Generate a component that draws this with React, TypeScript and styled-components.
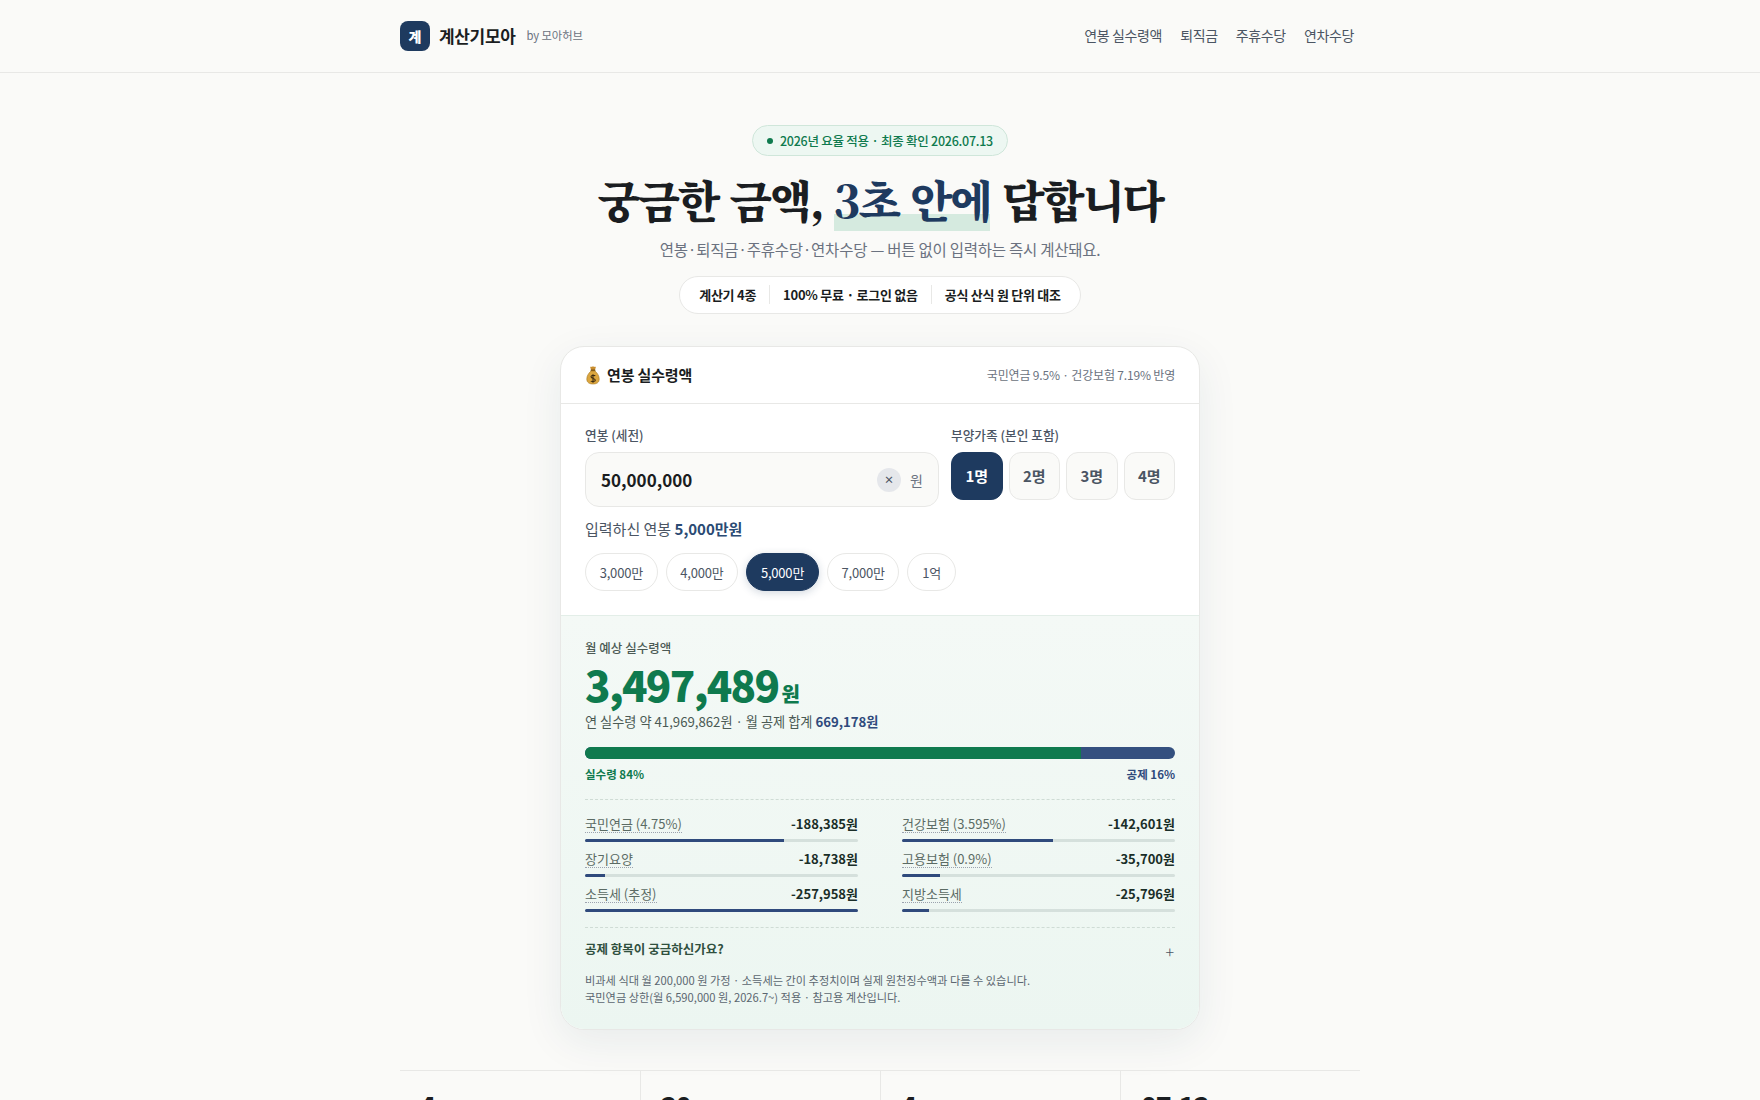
import React from 'react'
import styled, { createGlobalStyle } from 'styled-components'

const GlobalStyle = createGlobalStyle`
    * {
        box-sizing: border-box;
    }
    html,
    body {
        margin: 0;
        height: 1100px;
        overflow: hidden;
        background: #fafaf8;
        color: #1a1d21;
        font-family: 'Noto Sans CJK KR', 'Noto Sans', sans-serif;
    }
`

const NAV_LINKS = ['연봉 실수령액', '퇴직금', '주휴수당', '연차수당']
const TRUST = ['계산기 4종', '100% 무료 · 로그인 없음', '공식 산식 원 단위 대조']
const DEPENDENTS = ['1명', '2명', '3명', '4명']
const PRESETS = ['3,000만', '4,000만', '5,000만', '7,000만', '1억']
const DEDUCTIONS = [
    { label: '국민연금 (4.75%)', value: '-188,385원', pct: 72.8 },
    { label: '건강보험 (3.595%)', value: '-142,601원', pct: 55.3 },
    { label: '장기요양', value: '-18,738원', pct: 7.3 },
    { label: '고용보험 (0.9%)', value: '-35,700원', pct: 14 },
    { label: '소득세 (추정)', value: '-257,958원', pct: 100 },
    { label: '지방소득세', value: '-25,796원', pct: 10 },
]
const STATS = [
    { id: 'calculators', value: '4' },
    { id: 'days', value: '30' },
    { id: 'rates', value: '4' },
    { id: 'updated', value: '07.13' },
]

const MoneyBag = () => (
    <BagIcon width="16" height="20" viewBox="0 0 16 20" aria-hidden="true">
        <path d="M5 1.5C6 2.6 7 1 8 1.5C9 1 10 2.6 11 1.5L10 5H6Z" fill="#c98d2e" />
        <rect x="5.6" y="4.4" width="4.8" height="1.6" rx="0.6" fill="#7a5418" />
        <path
            d="M6 6C3.6 8 1.8 11 1.8 14C1.8 17.5 4.2 19 8 19C11.8 19 14.2 17.5 14.2 14C14.2 11 12.4 8 10 6Z"
            fill="#dba63f"
            stroke="#a6761f"
            strokeWidth="0.6"
        />
        <path
            d="M10.2 10.9C9.6 10 6 9.8 6 11.8C6 14 10.3 13 10.3 15.2C10.3 17 6.5 16.8 5.8 16M8 9.2V17.8"
            fill="none"
            stroke="#3b2a10"
            strokeWidth="1.1"
        />
    </BagIcon>
)

const App: React.FC = () => {
    return (
        <>
            <GlobalStyle />
            <Header>
                <HeaderInner>
                    <Brand>
                        <LogoMark>계</LogoMark>
                        <BrandName>계산기모아</BrandName>
                        <BrandBy>by 모아허브</BrandBy>
                    </Brand>
                    <Nav>
                        {NAV_LINKS.map((link) => (
                            <NavLink key={link}>{link}</NavLink>
                        ))}
                    </Nav>
                </HeaderInner>
            </Header>
            <Hero>
                <Badge>
                    <BadgeDot />
                    2026년 요율 적용 · 최종 확인 2026.07.13
                </Badge>
                <Title>
                    궁금한 금액, <Highlight>3초 안에</Highlight> 답합니다
                </Title>
                <Subtitle>연봉·퇴직금·주휴수당·연차수당 — 버튼 없이 입력하는 즉시 계산돼요.</Subtitle>
                <TrustBar>
                    {TRUST.map((item) => (
                        <TrustItem key={item}>{item}</TrustItem>
                    ))}
                </TrustBar>
            </Hero>
            <Card>
                <CardHead>
                    <CardTitle>
                        <MoneyBag />
                        연봉 실수령액
                    </CardTitle>
                    <CardNote>국민연금 9.5% · 건강보험 7.19% 반영</CardNote>
                </CardHead>
                <InputArea>
                    <FieldRow>
                        <div>
                            <FieldLabel>연봉 (세전)</FieldLabel>
                            <AmountBox>
                                <AmountValue>50,000,000</AmountValue>
                                <ClearButton>×</ClearButton>
                                <AmountUnit>원</AmountUnit>
                            </AmountBox>
                        </div>
                        <div>
                            <FieldLabel>부양가족 (본인 포함)</FieldLabel>
                            <DependentRow>
                                {DEPENDENTS.map((d, i) => (
                                    <DependentButton key={d} $active={i === 0}>
                                        {d}
                                    </DependentButton>
                                ))}
                            </DependentRow>
                        </div>
                    </FieldRow>
                    <EchoLine>
                        입력하신 연봉 <strong>5,000만원</strong>
                    </EchoLine>
                    <PresetRow>
                        {PRESETS.map((p) => (
                            <PresetChip key={p} $active={p === '5,000만'}>
                                {p}
                            </PresetChip>
                        ))}
                    </PresetRow>
                </InputArea>
                <Result>
                    <ResultLabel>월 예상 실수령액</ResultLabel>
                    <ResultAmount>
                        3,497,489<ResultUnit>원</ResultUnit>
                    </ResultAmount>
                    <ResultSub>
                        연 실수령 약 41,969,862원 · 월 공제 합계 <strong>669,178원</strong>
                    </ResultSub>
                    <SplitBar>
                        <SplitNet />
                    </SplitBar>
                    <SplitLegend>
                        <NetText>실수령 84%</NetText>
                        <DeductText>공제 16%</DeductText>
                    </SplitLegend>
                    <DeductionGrid>
                        {DEDUCTIONS.map((d) => (
                            <DeductionItem key={d.label}>
                                <DeductionLine>
                                    <DeductionName>{d.label}</DeductionName>
                                    <DeductionValue>{d.value}</DeductionValue>
                                </DeductionLine>
                                <MiniTrack>
                                    <MiniFill style={{ width: `${d.pct}%` }} />
                                </MiniTrack>
                            </DeductionItem>
                        ))}
                    </DeductionGrid>
                    <Faq>
                        <FaqTitle>공제 항목이 궁금하신가요?</FaqTitle>
                        <FaqPlus>+</FaqPlus>
                    </Faq>
                    <Disclaimer>
                        비과세 식대 월 200,000 원 가정 · 소득세는 간이 추정치이며 실제 원천징수액과 다를 수 있습니다.
                        <br />
                        국민연금 상한(월 6,590,000 원, 2026.7~) 적용 · 참고용 계산입니다.
                    </Disclaimer>
                </Result>
            </Card>
            <Stats>
                {STATS.map((s) => (
                    <StatCell key={s.id}>{s.value}</StatCell>
                ))}
            </Stats>
        </>
    )
}

export default App

const Header = styled.header`
    height: 73px;
    border-bottom: 1px solid #e8e8e6;
`

const HeaderInner = styled.div`
    width: 960px;
    height: 100%;
    margin: 0 auto;
    padding: 0 6px 0 0;
    display: flex;
    align-items: center;
    justify-content: space-between;
`

const Brand = styled.div`
    display: flex;
    align-items: center;
`

const LogoMark = styled.div`
    width: 30px;
    height: 30px;
    border-radius: 8px;
    background: #1e3a5f;
    color: #fff;
    font-size: 14px;
    font-weight: 900;
    display: flex;
    align-items: center;
    justify-content: center;
    margin-right: 9px;
`

const BrandName = styled.span`
    margin-bottom: 2px;
    font-size: 17px;
    font-weight: 700;
    letter-spacing: -0.34px;
    margin-right: 11px;
`

const BrandBy = styled.span`
    margin-bottom: 2px;
    font-size: 11.3px;
    letter-spacing: -0.1px;
    color: #6b7280;
`

const Nav = styled.nav`
    display: flex;
    gap: 18px;
    margin-bottom: 2px;
`

const NavLink = styled.a`
    font-size: 14px;
    letter-spacing: -0.35px;
    color: #4b5563;
`

const Hero = styled.section`
    padding-top: 52px;
    display: flex;
    flex-direction: column;
    align-items: center;
`

const Badge = styled.div`
    height: 31px;
    padding: 0 14px;
    border: 1px solid #cfe6da;
    border-radius: 999px;
    background: #edf7f2;
    color: #0f7a4e;
    font-size: 12.5px;
    letter-spacing: -0.25px;
    font-weight: 500;
    display: flex;
    align-items: center;
    gap: 7px;
`

const BadgeDot = styled.span`
    width: 6px;
    height: 6px;
    border-radius: 50%;
    background: #0f7a4e;
`

const Title = styled.h1`
    margin: 13px 0 0;
    font-family: 'Noto Serif CJK KR', serif;
    font-size: 44px;
    font-weight: 900;
    line-height: 60px;
    letter-spacing: -2.35px;
    word-spacing: 3px;
`

const Highlight = styled.span`
    color: #1e3a5f;
    background: linear-gradient(transparent 73%, #d5eadf 73%);
`

const Subtitle = styled.p`
    margin: 8px 0 0;
    font-size: 15.5px;
    letter-spacing: -0.25px;
    line-height: 24px;
    color: #6b7280;
`

const TrustBar = styled.div`
    margin-top: 15px;
    height: 38px;
    padding: 0 19px 2px;
    border: 1px solid #e8e8e6;
    border-radius: 999px;
    background: #fff;
    display: flex;
    align-items: center;
`

const TrustItem = styled.span`
    font-size: 13px;
    letter-spacing: -0.26px;
    font-weight: 600;
    padding: 0 13px;
    border-left: 1px solid #e8e8e6;
    &:first-child {
        border-left: none;
        padding-left: 0;
    }
    &:last-child {
        padding-right: 0;
    }
`

const Card = styled.main`
    width: 640px;
    margin: 32px auto 0;
    border: 1px solid #e8e8e6;
    border-radius: 24px;
    background: #fff;
    box-shadow: 0 12px 40px rgba(30, 58, 95, 0.08);
    overflow: hidden;
`

const CardHead = styled.div`
    height: 57px;
    padding: 0 24px 2px;
    border-bottom: 1px solid #e8e8e6;
    display: flex;
    align-items: center;
    justify-content: space-between;
`

const CardTitle = styled.h2`
    margin: 0;
    font-size: 15px;
    letter-spacing: -0.15px;
    font-weight: 700;
    display: flex;
    align-items: center;
    gap: 6px;
`

const BagIcon = styled.svg`
    margin-top: 2px;
`

const CardNote = styled.span`
    font-size: 12px;
    letter-spacing: -0.18px;
    color: #6b7280;
`

const InputArea = styled.div`
    padding: 21px 24px 24px;
`

const FieldRow = styled.div`
    display: grid;
    grid-template-columns: 354px 1fr;
    gap: 12px;
`

const FieldLabel = styled.div`
    font-size: 12.7px;
    font-weight: 500;
    line-height: 19px;
    color: #4b5563;
    margin-bottom: 8px;
`

const AmountBox = styled.div`
    height: 55px;
    padding: 0 15px;
    border: 1px solid #e8e8e6;
    border-radius: 14px;
    background: #fafaf8;
    display: flex;
    align-items: center;
`

const AmountValue = styled.span`
    flex: 1;
    font-size: 17px;
    font-weight: 700;
`

const ClearButton = styled.span`
    width: 24px;
    height: 24px;
    margin-right: 9px;
    border-radius: 50%;
    background: #e5e7eb;
    color: #4b5563;
    font-size: 10px;
    font-weight: 700;
    display: flex;
    align-items: center;
    justify-content: center;
`

const AmountUnit = styled.span`
    font-size: 14px;
    color: #6b7280;
`

const DependentRow = styled.div`
    display: grid;
    grid-template-columns: repeat(4, 1fr);
    gap: 6px;
`

const DependentButton = styled.div<{ $active: boolean }>`
    height: 48px;
    padding-bottom: 2px;
    border: 1px solid ${(p) => (p.$active ? '#1e3a5f' : '#e8e8e6')};
    border-radius: 12px;
    background: ${(p) => (p.$active ? '#1e3a5f' : '#fafaf8')};
    color: ${(p) => (p.$active ? '#fff' : '#4b5563')};
    font-size: 15px;
    font-weight: 700;
    display: flex;
    align-items: center;
    justify-content: center;
`

const EchoLine = styled.div`
    margin-top: 10px;
    font-size: 15px;
    line-height: 24px;
    color: #4b5563;
    strong {
        color: #2a4a73;
        font-weight: 700;
    }
`

const PresetRow = styled.div`
    margin-top: 12px;
    display: flex;
    gap: 8px;
`

const PresetChip = styled.div<{ $active: boolean }>`
    height: 38px;
    padding: 0 13.7px;
    border: 1px solid ${(p) => (p.$active ? '#1e3a5f' : '#e8e8e6')};
    border-radius: 999px;
    background: ${(p) => (p.$active ? '#1e3a5f' : '#fff')};
    color: ${(p) => (p.$active ? '#fff' : '#4b5563')};
    font-size: 13px;
    letter-spacing: -0.2px;
    display: flex;
    align-items: center;
    box-shadow: ${(p) => (p.$active ? '0 2px 8px rgba(30, 58, 95, 0.2)' : 'none')};
`

const Result = styled.section`
    padding: 23px 24px 23px;
    border-top: 1px solid #e3eee8;
    background: linear-gradient(180deg, #f4f9f6 0%, #ecf6f1 100%);
`

const ResultLabel = styled.div`
    font-size: 12.5px;
    font-weight: 500;
    line-height: 18px;
    color: #4b5a54;
`

const ResultAmount = styled.div`
    margin-top: 5px;
    font-size: 42px;
    font-weight: 800;
    line-height: 44px;
    letter-spacing: -1.68px;
    color: #0f7a4e;
`

const ResultUnit = styled.span`
    margin-left: 3px;
    font-size: 20px;
    line-height: 1;
    letter-spacing: 0;
`

const ResultSub = styled.div`
    margin-top: 6px;
    font-size: 13.2px;
    line-height: 20px;
    color: #4b5a54;
    strong {
        color: #2f4a7c;
        font-weight: 700;
    }
`

const SplitBar = styled.div`
    margin-top: 15px;
    height: 12px;
    border-radius: 6px;
    background: #34507f;
    overflow: hidden;
`

const SplitNet = styled.div`
    width: 84%;
    height: 100%;
    background: #0f7a4e;
`

const SplitLegend = styled.div`
    margin-top: 6px;
    display: flex;
    justify-content: space-between;
    font-size: 11.5px;
    font-weight: 700;
    line-height: 18px;
`

const NetText = styled.span`
    color: #0f7a4e;
`

const DeductText = styled.span`
    color: #2f4a7c;
`

const DeductionGrid = styled.div`
    margin-top: 16px;
    padding: 14px 0 15px;
    border-top: 1px dashed #cfdcd5;
    border-bottom: 1px dashed #cfdcd5;
    display: grid;
    grid-template-columns: 1fr 1fr;
    column-gap: 44px;
    row-gap: 7px;
`

const DeductionItem = styled.div``

const DeductionLine = styled.div`
    display: flex;
    justify-content: space-between;
    align-items: center;
    font-size: 13px;
    line-height: 20px;
`

const DeductionName = styled.span`
    color: #5b6b64;
    border-bottom: 1px dotted #9ca3af;
    line-height: 17px;
`

const DeductionValue = styled.span`
    font-weight: 700;
    color: #1a2e28;
`

const MiniTrack = styled.div`
    margin-top: 5px;
    height: 3px;
    border-radius: 2px;
    background: #d5e0dc;
    overflow: hidden;
`

const MiniFill = styled.div`
    height: 100%;
    background: #2f4a7c;
`

const Faq = styled.div`
    margin-top: 11px;
    height: 19px;
    display: flex;
    align-items: center;
    justify-content: space-between;
`

const FaqTitle = styled.span`
    font-size: 12.5px;
    font-weight: 700;
    color: #30503f;
`

const FaqPlus = styled.span`
    margin: 4px 1px 0 0;
    font-size: 16px;
    font-weight: 300;
    color: #4b5563;
`

const Disclaimer = styled.p`
    margin: 14px 0 0;
    font-size: 11.2px;
    line-height: 17px;
    color: #5b6670;
`

const Stats = styled.div`
    width: 960px;
    margin: 40px auto 0;
    border-top: 1px solid #e8e8e6;
    display: grid;
    grid-template-columns: repeat(4, 1fr);
`

const StatCell = styled.div`
    padding: 15px 20px;
    font-size: 26px;
    letter-spacing: -1px;
    font-weight: 800;
    border-left: 1px solid #e8e8e6;
    &:first-child {
        border-left: none;
    }
`
